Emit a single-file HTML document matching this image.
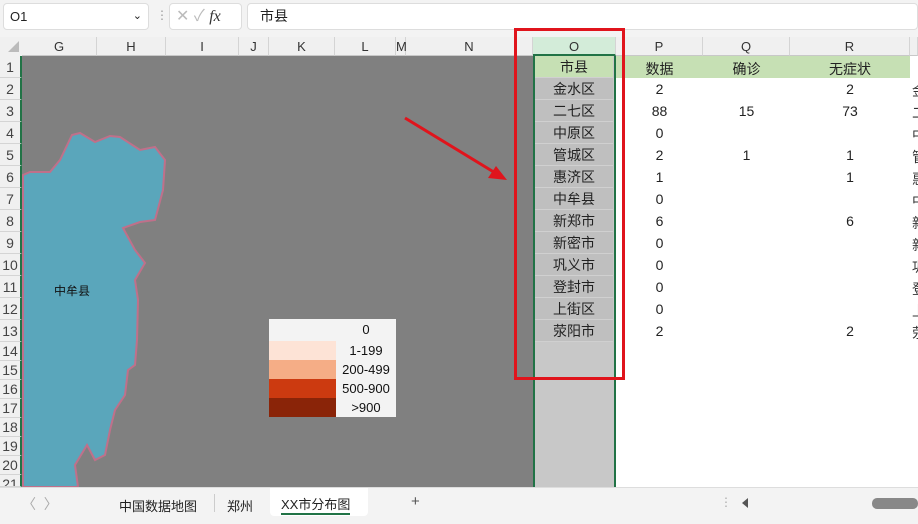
<!DOCTYPE html>
<html><head><meta charset="utf-8"><style>
*{margin:0;padding:0;box-sizing:border-box}
body{width:918px;height:524px;overflow:hidden;background:#fff;font-family:"Liberation Sans","Noto Sans CJK SC",sans-serif;position:relative;font-size:14px;color:#222}
.a{position:absolute}
.ch{position:absolute;top:37px;height:19px;background:#f0f0f0;border-right:1px solid #d4d4d4;border-bottom:1px solid #c8c8c8;text-align:center;font-size:13px;line-height:19px;color:#333}
.rh{position:absolute;left:0;width:22px;background:#f0f0f0;border-bottom:1px solid #d4d4d4;text-align:center;font-size:14px;color:#444;border-right:2px solid #217346}
.oc{position:absolute;left:535px;width:78px;background:#bfbfbf;text-align:center;font-size:14px;border-bottom:1px solid #d0d0d0}
.pc{position:absolute;text-align:center;font-size:14px}
.sc{position:absolute;left:912px;font-size:14px;color:#333}
</style></head><body>
<div class="a" style="left:0;top:0;width:918px;height:37px;background:#f3f3f3"></div>
<div class="a" style="left:3px;top:3px;width:146px;height:27px;background:#fff;border:1px solid #ddd;border-radius:4px;font-size:13px;line-height:25px;padding-left:6px">O1<span style="position:absolute;right:6px;top:0;font-size:11px">&#8964;</span></div>
<div class="a" style="left:156px;top:8px;color:#999;font-size:12px">⋮</div>
<div class="a" style="left:169px;top:3px;width:73px;height:27px;background:#fff;border:1px solid #ddd;border-radius:4px;color:#bbb;font-size:16px;line-height:25px;padding-left:6px">✕ ✓ <i style="color:#333;font-family:'Liberation Serif',serif">fx</i></div>
<div class="a" style="left:247px;top:3px;width:671px;height:27px;background:#fff;border:1px solid #ddd;border-radius:4px;font-size:14px;line-height:25px;padding-left:12px">市县</div>
<div class="a" style="left:0;top:37px;width:22px;height:19px;background:#f0f0f0"></div>
<svg class="a" style="left:6px;top:41px" width="14" height="12"><path d="M13 0V11H2Z" fill="#bbb"/></svg>
<div class="ch" style="left:22px;width:75px">G</div>
<div class="ch" style="left:97px;width:69px">H</div>
<div class="ch" style="left:166px;width:73px">I</div>
<div class="ch" style="left:239px;width:30px">J</div>
<div class="ch" style="left:269px;width:66px">K</div>
<div class="ch" style="left:335px;width:61px">L</div>
<div class="ch" style="left:396px;width:10px">M</div>
<div class="ch" style="left:406px;width:127px">N</div>
<div class="ch" style="left:533px;width:83px;background:#d3ecd9;border-bottom:2px solid #217346">O</div>
<div class="ch" style="left:616px;width:87px">P</div>
<div class="ch" style="left:703px;width:87px">Q</div>
<div class="ch" style="left:790px;width:120px">R</div>
<div class="ch" style="left:910px;width:8px"></div>
<div class="rh" style="top:56px;height:22px;line-height:22px">1</div><div class="rh" style="top:78px;height:22px;line-height:22px">2</div><div class="rh" style="top:100px;height:22px;line-height:22px">3</div><div class="rh" style="top:122px;height:22px;line-height:22px">4</div><div class="rh" style="top:144px;height:22px;line-height:22px">5</div><div class="rh" style="top:166px;height:22px;line-height:22px">6</div><div class="rh" style="top:188px;height:22px;line-height:22px">7</div><div class="rh" style="top:210px;height:22px;line-height:22px">8</div><div class="rh" style="top:232px;height:22px;line-height:22px">9</div><div class="rh" style="top:254px;height:22px;line-height:22px">10</div><div class="rh" style="top:276px;height:22px;line-height:22px">11</div><div class="rh" style="top:298px;height:22px;line-height:22px">12</div><div class="rh" style="top:320px;height:22px;line-height:22px">13</div>
<div class="rh" style="top:342px;height:19px;line-height:19px">14</div><div class="rh" style="top:361px;height:19px;line-height:19px">15</div><div class="rh" style="top:380px;height:19px;line-height:19px">16</div><div class="rh" style="top:399px;height:19px;line-height:19px">17</div><div class="rh" style="top:418px;height:19px;line-height:19px">18</div><div class="rh" style="top:437px;height:19px;line-height:19px">19</div><div class="rh" style="top:456px;height:19px;line-height:19px">20</div><div class="rh" style="top:475px;height:12px;line-height:19px;overflow:hidden">21</div>
<div class="a" style="left:22px;top:56px;width:511px;height:431px;background:#808080"></div>
<svg class="a" style="left:0;top:0" width="540" height="490"><path d="M23 175L30 172L50 172L60 160L72 135L80 133L95 142L110 136L120 137L140 150L155 147L165 160L163 190L155 220L140 222L123 228L135 250L145 263L135 280L138 300L137 340L135 365L128 370L125 395L115 410L110 430L105 455L95 460L87 445L75 465L78 487L23 487Z" fill="#5aa6bb" stroke="#c0708a" stroke-width="2"/></svg>
<div class="a" style="left:54px;top:282px;font-size:12px;color:#111">中牟县</div>
<div class="a" style="left:269px;top:319px;width:127px;height:98px;background:#f3f3f3;font-size:13px;color:#111">
<div class="a" style="left:0;top:22px;width:67px;height:19px;background:#fde3d6"></div>
<div class="a" style="left:0;top:41px;width:67px;height:19px;background:#f5ad86"></div>
<div class="a" style="left:0;top:60px;width:67px;height:19px;background:#cc3a10"></div>
<div class="a" style="left:0;top:79px;width:67px;height:19px;background:#8a2408"></div>
<div class="a" style="left:67px;top:3px;width:60px;text-align:center">0</div>
<div class="a" style="left:67px;top:24px;width:60px;text-align:center">1-199</div>
<div class="a" style="left:67px;top:43px;width:60px;text-align:center">200-499</div>
<div class="a" style="left:67px;top:62px;width:60px;text-align:center">500-900</div>
<div class="a" style="left:67px;top:81px;width:60px;text-align:center">&gt;900</div>
</div>
<div class="a" style="left:533px;top:56px;width:83px;height:431px;background:#c8c8c8;border-left:2px solid #217346;border-right:2px solid #217346"></div>
<div class="a" style="left:616px;top:56px;width:294px;height:22px;background:#c6e0b4"></div>
<div class="oc" style="top:56px;height:22px;line-height:22px;background:#c6e0b4">市县</div>
<div class="oc" style="top:78px;height:22px;line-height:22px">金水区</div><div class="oc" style="top:100px;height:22px;line-height:22px">二七区</div><div class="oc" style="top:122px;height:22px;line-height:22px">中原区</div><div class="oc" style="top:144px;height:22px;line-height:22px">管城区</div><div class="oc" style="top:166px;height:22px;line-height:22px">惠济区</div><div class="oc" style="top:188px;height:22px;line-height:22px">中牟县</div><div class="oc" style="top:210px;height:22px;line-height:22px">新郑市</div><div class="oc" style="top:232px;height:22px;line-height:22px">新密市</div><div class="oc" style="top:254px;height:22px;line-height:22px">巩义市</div><div class="oc" style="top:276px;height:22px;line-height:22px">登封市</div><div class="oc" style="top:298px;height:22px;line-height:22px">上街区</div><div class="oc" style="top:320px;height:22px;line-height:22px">荥阳市</div>
<div class="pc" style="left:616px;width:87px;top:59px">数据</div><div class="pc" style="left:703px;width:87px;top:59px">确诊</div><div class="pc" style="left:790px;width:120px;top:59px">无症状</div>
<div class="pc" style="left:616px;width:87px;top:81px">2</div><div class="pc" style="left:790px;width:120px;top:81px">2</div>
<div class="pc" style="left:616px;width:87px;top:103px">88</div><div class="pc" style="left:703px;width:87px;top:103px">15</div><div class="pc" style="left:790px;width:120px;top:103px">73</div>
<div class="pc" style="left:616px;width:87px;top:125px">0</div>
<div class="pc" style="left:616px;width:87px;top:147px">2</div><div class="pc" style="left:703px;width:87px;top:147px">1</div><div class="pc" style="left:790px;width:120px;top:147px">1</div>
<div class="pc" style="left:616px;width:87px;top:169px">1</div><div class="pc" style="left:790px;width:120px;top:169px">1</div>
<div class="pc" style="left:616px;width:87px;top:191px">0</div>
<div class="pc" style="left:616px;width:87px;top:213px">6</div><div class="pc" style="left:790px;width:120px;top:213px">6</div>
<div class="pc" style="left:616px;width:87px;top:235px">0</div><div class="pc" style="left:616px;width:87px;top:257px">0</div><div class="pc" style="left:616px;width:87px;top:279px">0</div><div class="pc" style="left:616px;width:87px;top:301px">0</div>
<div class="pc" style="left:616px;width:87px;top:323px">2</div><div class="pc" style="left:790px;width:120px;top:323px">2</div>
<div class="sc" style="top:81px">金</div><div class="sc" style="top:103px">二</div><div class="sc" style="top:125px">中</div><div class="sc" style="top:147px">管</div><div class="sc" style="top:169px">惠</div><div class="sc" style="top:191px">中</div><div class="sc" style="top:213px">新</div><div class="sc" style="top:235px">新</div><div class="sc" style="top:257px">巩</div><div class="sc" style="top:279px">登</div><div class="sc" style="top:301px">上</div><div class="sc" style="top:323px">荥</div>
<div class="a" style="left:514px;top:28px;width:111px;height:352px;border:3px solid #e0141c"></div>
<svg class="a" style="left:0;top:0" width="520" height="200"><path d="M405 118L497 174" stroke="#e0141c" stroke-width="3"/><path d="M507 180L488 178L496 166Z" fill="#e0141c"/></svg>
<div class="a" style="left:0;top:487px;width:918px;height:37px;background:#f3f3f3;border-top:1px solid #ddd"></div>
<div class="a" style="left:22px;top:494px;color:#aaa;font-size:14px">〈 &nbsp;〉</div>
<div class="a" style="left:119px;top:496px;font-size:13px">中国数据地图</div>
<div class="a" style="left:214px;top:494px;width:1px;height:18px;background:#ccc"></div>
<div class="a" style="left:227px;top:496px;font-size:13px">郑州</div>
<div class="a" style="left:270px;top:488px;width:98px;height:28px;background:#fff;border-radius:0 0 4px 4px"></div>
<div class="a" style="left:281px;top:494px;font-size:13px;border-bottom:2px solid #217346">XX市分布图</div>
<div class="a" style="left:411px;top:493px;font-size:15px;color:#555">+</div>
<div class="a" style="left:720px;top:495px;color:#aaa;font-size:12px">⋮</div>
<div class="a" style="left:742px;top:498px;width:0;height:0;border-top:5px solid transparent;border-bottom:5px solid transparent;border-right:6px solid #555"></div>
<div class="a" style="left:872px;top:498px;width:46px;height:11px;background:#888;border-radius:5px"></div>
</body></html>
